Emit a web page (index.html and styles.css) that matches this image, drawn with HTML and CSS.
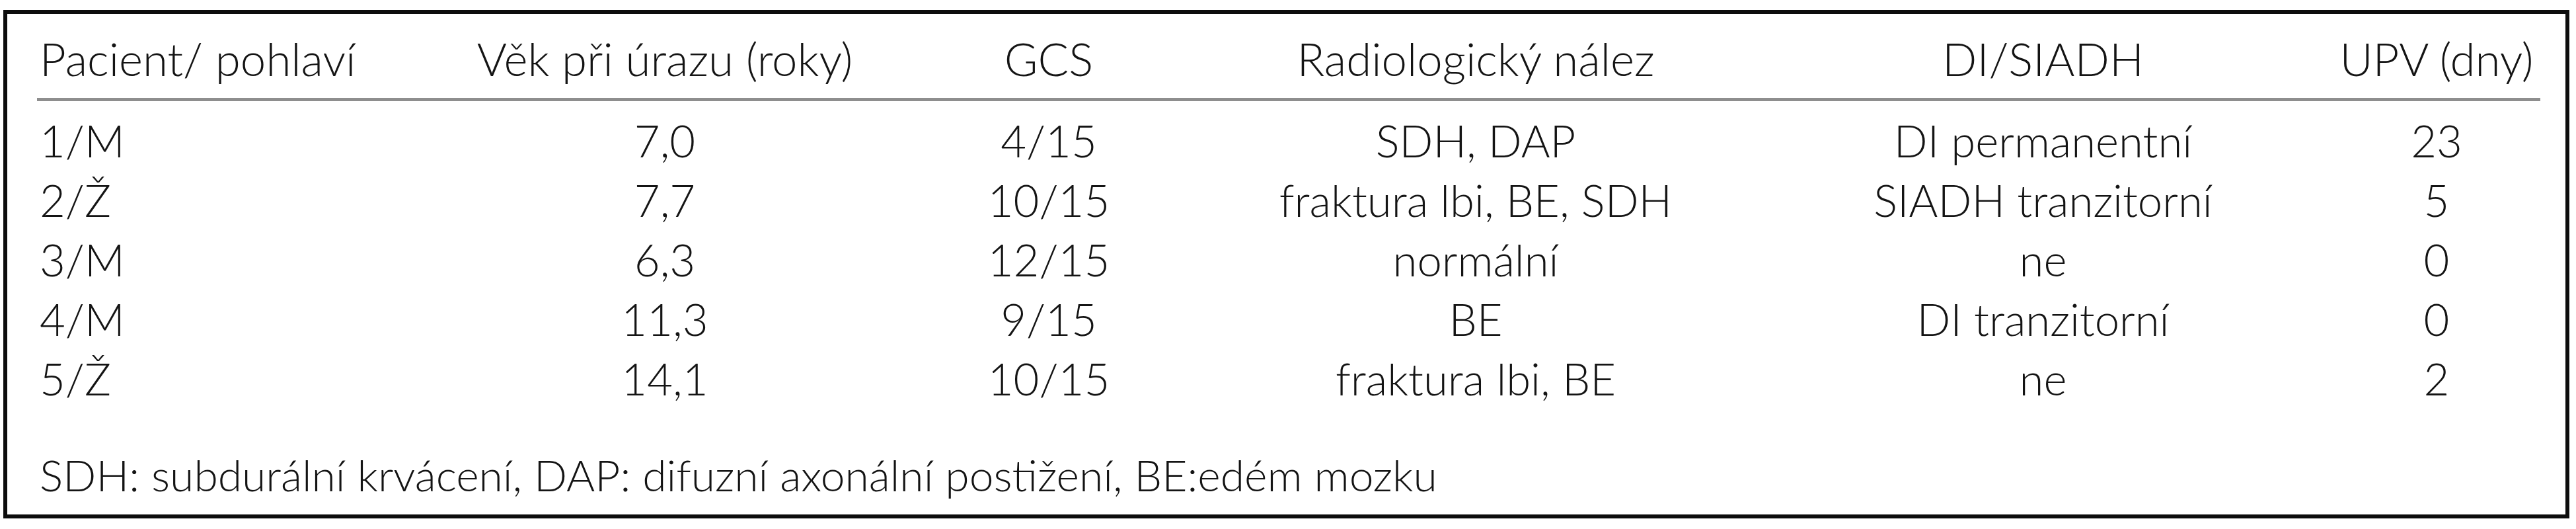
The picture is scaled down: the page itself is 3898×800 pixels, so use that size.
FILE: index.html
```html
<!DOCTYPE html>
<html lang="cs">
<head>
<meta charset="utf-8">
<title>Tabulka pacientů</title>
<link rel="stylesheet" href="styles.css">
</head>
<body>
<div class="frame">
  <div class="table">
    <div class="row head">
      <div class="c c1">Pacient/ pohlaví</div>
      <div class="c c2">Věk při úrazu (roky)</div>
      <div class="c c3">GCS</div>
      <div class="c c4">Radiologický nález</div>
      <div class="c c5">DI/SIADH</div>
      <div class="c c6">UPV (dny)</div>
    </div>
    <div class="body">
      <div class="row">
        <div class="c c1">1/M</div>
        <div class="c c2">7,0</div>
        <div class="c c3">4/15</div>
        <div class="c c4">SDH, DAP</div>
        <div class="c c5">DI permanentní</div>
        <div class="c c6">23</div>
      </div>
      <div class="row">
        <div class="c c1">2/Ž</div>
        <div class="c c2">7,7</div>
        <div class="c c3">10/15</div>
        <div class="c c4">fraktura lbi, BE, SDH</div>
        <div class="c c5">SIADH tranzitorní</div>
        <div class="c c6">5</div>
      </div>
      <div class="row">
        <div class="c c1">3/M</div>
        <div class="c c2">6,3</div>
        <div class="c c3">12/15</div>
        <div class="c c4">normální</div>
        <div class="c c5">ne</div>
        <div class="c c6">0</div>
      </div>
      <div class="row">
        <div class="c c1">4/M</div>
        <div class="c c2">11,3</div>
        <div class="c c3">9/15</div>
        <div class="c c4">BE</div>
        <div class="c c5">DI tranzitorní</div>
        <div class="c c6">0</div>
      </div>
      <div class="row">
        <div class="c c1">5/Ž</div>
        <div class="c c2">14,1</div>
        <div class="c c3">10/15</div>
        <div class="c c4">fraktura lbi, BE</div>
        <div class="c c5">ne</div>
        <div class="c c6">2</div>
      </div>
    </div>
    <div class="note">SDH: subdurální krvácení, DAP: difuzní axonální postižení, BE:edém mozku</div>
  </div>
</div>
</body>
</html>
```

FILE: styles.css
```css
html, body {
  margin: 0;
  padding: 0;
  background: #ffffff;
}

body {
  font-family: Lato, "Open Sans", "Liberation Sans", sans-serif;
  font-weight: 300;
  color: #141414;
}

.frame {
  margin: 15px 0 0 5px;
  width: 3883px;
  box-sizing: border-box;
  border: 6px solid #0d0d0d;
  padding: 23px 38px 15px 45px;
}

.table {
  font-size: 67px;
  line-height: 90px;
}

.row {
  display: grid;
  grid-template-columns: 645px 610px 552px 740px 925px 318px;
  white-space: nowrap;
}

.head {
  font-size: 69px;
  padding-bottom: 14px;
  border-bottom: 5px solid #8e8e8e;
}

.body {
  padding-top: 14px;
}

.c {
  text-align: center;
}

.c1 {
  text-align: left;
  padding-left: 4px;
}

.c5 {
  padding-left: 52px;
}

.note {
  font-size: 66px;
  margin-top: 56px;
  padding-left: 4px;
  white-space: nowrap;
}
```
